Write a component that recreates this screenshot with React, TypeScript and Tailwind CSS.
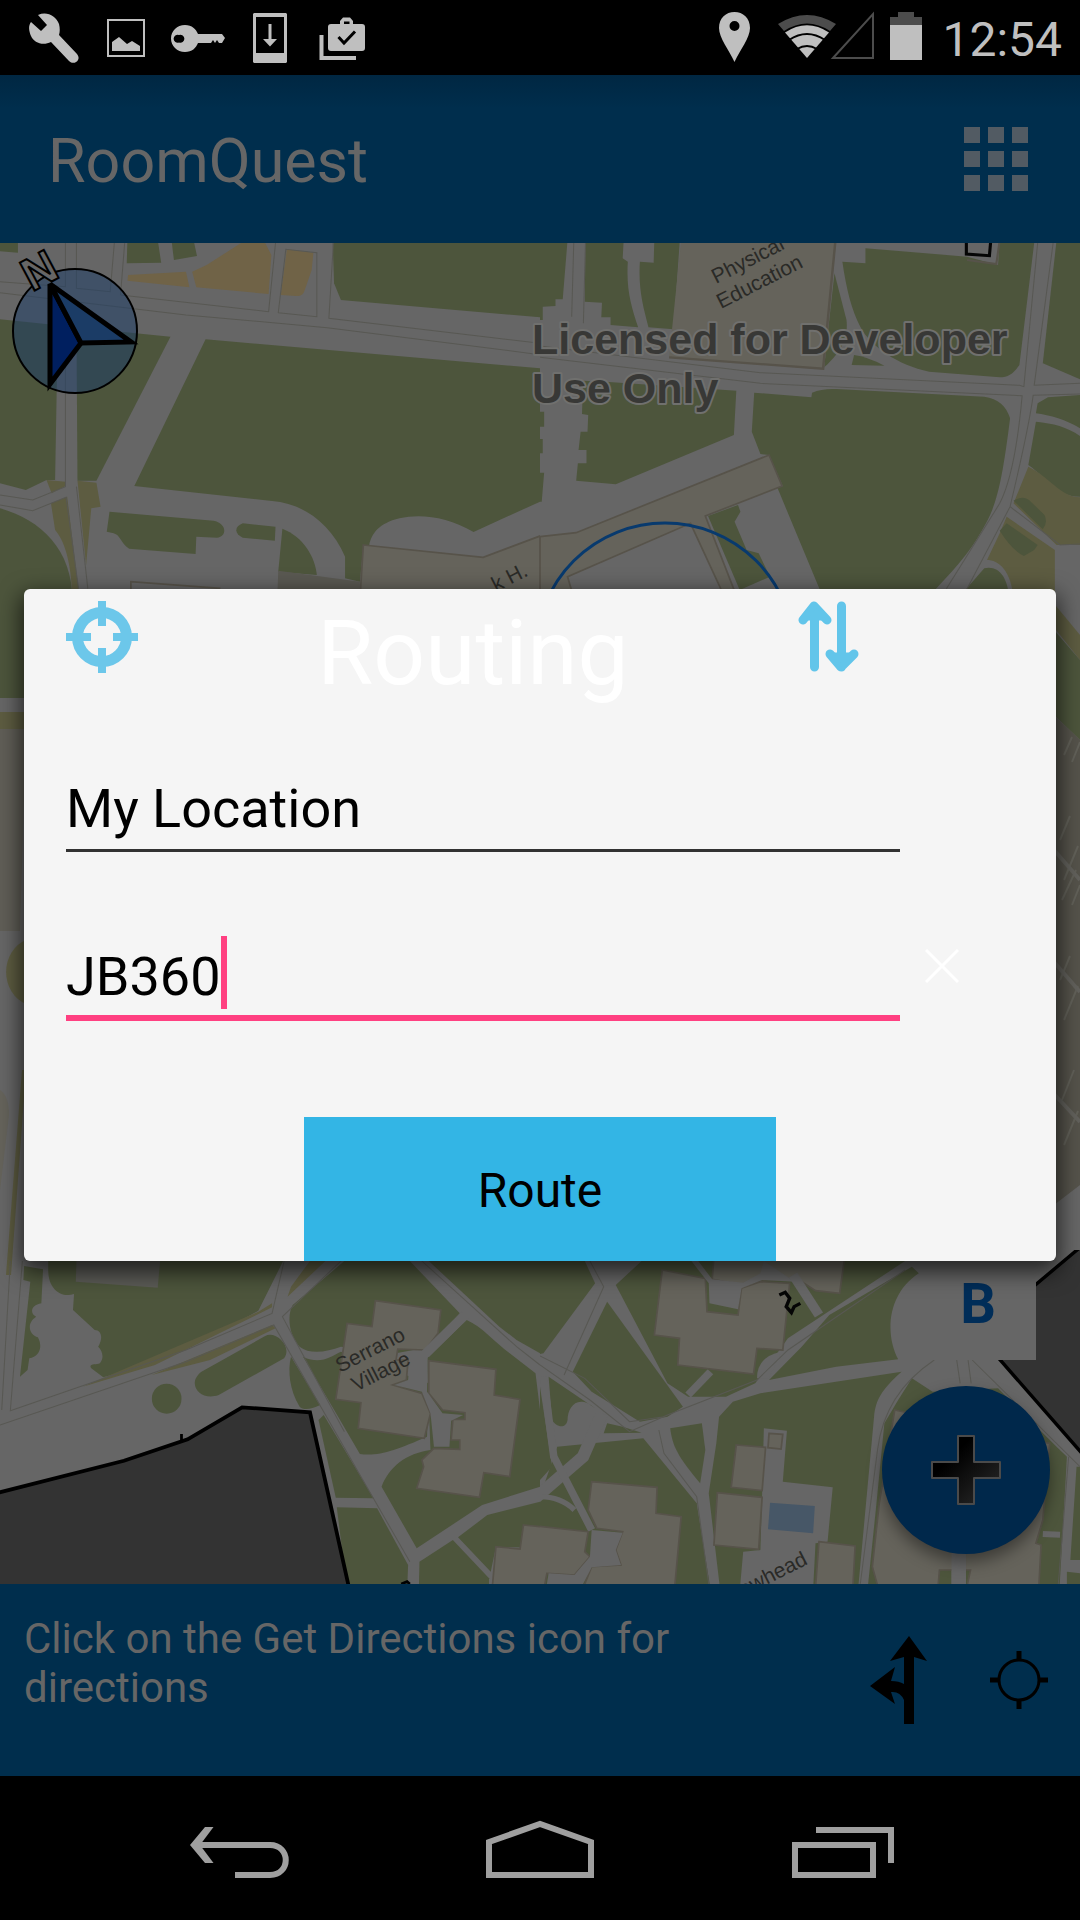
import { useState } from "react";

const GREEN = "#4d553c";
const ROAD = "#666666";
const BUILDING = "#65635b";
const EDGE = "#57534a";
const TAN = "#706347";
const OLIVE = "#5d5c41";
const LINE = "#585853";

function MapNorthWest() {
  return (
    <svg x="0" y="240" width="540" height="360" viewBox="0 0 1568 1080" preserveAspectRatio="none">
      <g fill={GREEN}>
        <path d="M0 0H52V38L0 34Z" />
        <path d="M370 0H458L468 68L368 70Z" />
        <path d="M498 0H562L572 48L505 60Z" />
        <path d="M966 0H1568V232L990 180L970 130Z" />
        <path d="M0 238L168 256L160 720H135L75 750L0 730Z" />
        <path d="M222 262L495 290L280 722L225 722Z" />
        <path d="M597 298L1568 385V785L1375 876C1300 830 1220 820 1160 835C1100 850 1080 880 1072 915L1055 915L1045 1025L1002 1015V950C960 850 880 790 790 783L390 738Z" />
        <path d="M318 815L620 842C660 850 660 890 630 893L570 890L568 942L375 926C350 910 350 885 330 880L310 875Z" />
        <path d="M705 850L800 860L798 902L705 893C680 880 680 860 705 850Z" />
        <path d="M820 866C880 890 915 950 920 1005L808 995Z" />
        <path d="M0 805C120 840 210 930 210 1080H0Z" />
      </g>
      <g fill={TAN}>
        <path d="M372 105L540 95L550 142L370 122Z" />
        <path d="M558 95L600 75L700 9H770L788 45L780 162L570 142Z" />
        <path d="M833 28L910 38L905 90L885 150Q880 170 860 168L815 165Z" />
      </g>
      <g fill={OLIVE}>
        <path d="M135 720L190 725V738L150 760Z" />
        <path d="M148 790L195 770L232 1080H210C208 960 185 900 160 870Z" />
        <path d="M225 722L280 728L292 800L265 805L250 975Z" />
      </g>
      <path d="M808 992L1045 1025V1080H805Z" fill="#5a5952" />
      <path d="M1055 915L1403 952L1568 888V1080H1045Z" fill={BUILDING} stroke={EDGE} strokeWidth="5" />
      <path d="M380 1080V1025L640 1045" fill="none" stroke={EDGE} strokeWidth="5" />
      <g fill="none" stroke={LINE} strokeWidth="3">
        <path d="M0 125L190 140V9M0 158L540 225L950 263L1568 344" />
        <path d="M222 9V145L320 155L332 9M350 165L780 215L800 9M350 165L362 9M808 218L920 230V38L830 28ZM968 9L955 235L1568 310" />
        <path d="M190 250V740L95 780L0 765M0 795L95 812L192 772L228 1046M222 740L255 1046" />
      </g>
    </svg>
  );
}

function MapNorthEast() {
  return (
    <svg x="540" y="240" width="540" height="360" viewBox="0 0 1568 1080" preserveAspectRatio="none">
      <g fill={GREEN}>
        <path d="M0 0H80L66 178H45V198L8 200V240H0Z" />
        <path d="M132 0H243L240 55L255 65C250 150 265 200 285 262L205 255V232H178L180 188L130 185Z" />
        <path d="M332 0H406L388 268L315 262C300 200 285 150 290 65L330 68Z" />
        <path d="M945 25L1240 50L1330 75L1335 0H1436L1392 375C1375 400 1360 412 1335 412L1130 395C1040 375 960 320 930 260C905 210 890 150 878 65L945 70Z" />
        <path d="M855 100L890 240C895 290 880 330 825 382Z" />
        <path d="M905 375L912 345Q950 350 1000 377Z" />
        <path d="M1500 0H1568V418L1460 370Z" />
        <path d="M125 422L190 425L570 452L563 585L220 733L105 722L110 670H135V630H112L118 575H138L140 525L122 522Z" />
        <path d="M0 515H12V560H0ZM0 597H8V640H0ZM0 698H12L5 785H0Z" />
        <path d="M790 458Q820 445 860 447L1290 470C1330 475 1355 500 1365 535C1345 700 1330 780 1300 840C1250 940 1200 990 1150 1046V1080H825L690 745L705 738L665 645L640 642L615 575L622 458L788 472Z" />
        <path d="M1475 472L1568 465V565C1530 540 1480 525 1440 520L1445 490Z" />
        <path d="M1440 545C1490 550 1530 560 1568 588V770C1500 770 1480 720 1418 675Z" />
      </g>
      <g fill={OLIVE}>
        <path d="M1418 680C1480 710 1510 770 1568 772V915H1500L1375 790Z" />
        <path d="M1335 880L1355 830L1495 930V1080H1375C1370 990 1330 960 1298 960Z" />
      </g>
      <g fill={GREEN}>
        <path d="M1375 782Q1400 765 1420 780L1465 825Q1475 850 1460 868Z" />
        <path d="M1335 872L1355 850L1445 915L1435 930L1405 948Q1370 930 1335 872Z" />
        <path d="M1290 985C1330 975 1360 1010 1362 1080H1210Z" />
      </g>
      <path d="M410 0H860L825 388L375 352Z" fill={BUILDING} />
      <path d="M858 0L822 386L375 352" fill="none" stroke={EDGE} strokeWidth="7" />
      <path d="M0 890L105 878L665 645L703 738L480 828L575 1080H540L437 850L80 1010L100 1080H0Z" fill={BUILDING} stroke={EDGE} strokeWidth="5" />
      <path d="M1240 60L1325 72L1335 0" fill="none" stroke={EDGE} strokeWidth="6" />
      <path d="M488 828L575 795L582 815L565 845L600 930L635 940L668 1010L580 1050Z" fill={GREEN} />
      <path d="M1238 0V42L1305 47L1309 0" fill="none" stroke="#050505" strokeWidth="9" />
      <g fill="none" stroke={LINE} strokeWidth="3">
        <path d="M0 318L640 398L1392 436L1405 440L1445 9M0 352L640 430L1400 467Q1380 700 1335 790L1180 1046" />
        <path d="M1490 9L1435 436L1568 430M1568 462L1432 466Q1420 560 1365 800L1240 1046M1365 800L1510 915L1568 912" />
        <path d="M98 9L92 230M132 9L126 250" />
      </g>
    </svg>
  );
}

function MapSides() {
  return (
    <g>
      <rect x="0" y="598" width="26" height="100" fill={GREEN} />
      <rect x="0" y="712" width="26" height="17" fill={OLIVE} />
      <path d="M0 729H26L20 931H0Z" fill="#605e57" />
      <path d="M26 940A30 34 0 0 0 26 1004Z" fill={OLIVE} />
      <path d="M0 1090Q9 1096 9 1115L0 1190Z" fill={BUILDING} />
      <path d="M26 1070L11 1275H6L22 1070Z" fill={OLIVE} />
      <path d="M1056 606L1080 635V660L1056 630Z" fill={OLIVE} />
      <path d="M1054 630L1080 660V740L1054 715Z" fill={GREEN} />
      <path d="M1054 715L1080 740V1185L1054 1205Z" fill="#55534b" />
      <path
        d="M1064 755l8 -18M1072 762l8 -20M1060 840l10 -24M1064 880l14 -34M1062 900l14 -30M1072 905l8 -20M1060 980l10 -24M1064 1020l14 -34M1062 1100l12 -30M1064 1145l14 -34"
        stroke="#626159"
        strokeWidth="2"
      />
      <path d="M1054 850L1080 880M1054 962L1080 992M1054 1094L1080 1122" stroke="#62615c" strokeWidth="4" />
    </g>
  );
}

function MapSouthWest() {
  return (
    <svg x="0" y="1250" width="540" height="360" viewBox="0 0 1568 1080" preserveAspectRatio="none">
      <g fill={GREEN}>
        <path d="M70 48L125 58L120 160C90 165 85 190 105 200C75 220 85 255 110 262C125 290 115 320 85 325L80 360L58 380L88 95L68 90Z" />
        <path d="M140 33H822L790 100L750 182C600 270 450 340 300 382L265 355C255 340 280 345 290 340C305 320 295 300 285 290C300 265 295 240 275 240L212 180L215 132C180 145 140 120 140 60Z" />
        <path d="M850 165L1000 33H1190L1335 190L1250 290L1150 310L990 290C950 305 900 315 870 290C835 250 835 190 850 165Z" />
        <path d="M1245 33H1568V310L1500 270L1450 230Z" />
        <path d="M1355 210C1400 230 1440 280 1480 310L1555 370L1568 480V710L1400 765L1210 895L1108 710C1130 650 1180 610 1250 600L1240 325Z" />
        <path d="M845 320L930 465C900 480 880 480 870 470C840 420 835 360 845 320Z" />
        <path d="M880 320C930 345 960 320 990 305L1245 400L1240 560C1150 600 1100 620 1045 612Z" />
        <path d="M940 495L925 510L975 743L1085 745Z" />
        <path d="M978 772L1095 775L1185 945L1180 1080H1015Z" />
        <path d="M1218 935L1315 870L1420 985V1080H1215Z" />
        <path d="M1330 862L1415 795L1568 755V895L1440 890L1425 965Z" />
        <path d="M585 365L770 258C800 240 850 290 825 325L635 435C580 455 540 400 585 365Z" />
        <ellipse cx="484" cy="446" rx="43" ry="45" />
      </g>
      <path d="M222 33H465L458 113L220 95Z" fill="#5b5b56" />
      <path d="M900 33L945 33L835 140L845 110ZM750 185L790 160V172L450 345L240 410ZM790 225L800 235L610 330L440 375Z" fill={OLIVE} />
      <g fill={BUILDING} stroke={EDGE} strokeWidth="5">
        <path d="M1090 152L1280 180L1272 250L1235 300L1155 297L1150 330L1185 330L1180 390L1140 405L1225 430L1250 490L1232 565L1040 535L1048 458L975 448L1008 220L1080 230Z" />
        <path d="M1245 332L1440 358L1435 435L1510 448L1480 680L1405 668L1392 742L1210 715L1230 650L1225 630L1260 595L1335 598V570L1310 570L1315 508L1350 508V488L1285 480L1245 430Z" />
        <path d="M1520 825L1600 833V1100H1422L1440 890L1510 897Z" />
      </g>
      <path d="M1190 315H1242L1240 425L1285 490L1345 495L1310 512L1305 590L1260 590L1250 490L1225 425L1145 405L1185 390Z" fill={ROAD} />
      <path d="M1235 312L1350 195" stroke={ROAD} strokeWidth="28" />
      <g fill="none" stroke={LINE} strokeWidth="3">
        <path d="M65 33L30 482L540 300L790 190L825 33M0 525L540 335L795 225L1190 935M30 33L5 480M990 33L820 200L1000 545M1225 33L1500 290L1568 345" />
      </g>
      <path d="M-20 732L360 632L545 568L703 472L900 487L1030 1090H-20Z" fill="#333333" stroke="#000000" strokeWidth="11" />
      <path d="M527 552V572M1165 1002L1182 995L1190 1002" stroke="#000000" strokeWidth="8" fill="none" />
    </svg>
  );
}

function MapSouthEast() {
  return (
    <svg x="540" y="1250" width="540" height="360" viewBox="0 0 1568 1080" preserveAspectRatio="none">
      <g fill={GREEN}>
        <path d="M0 33H130L160 100L10 310L0 312Z" />
        <path d="M220 105L295 33H1060L720 265L625 400L540 440H430L370 400Z" />
        <path d="M840 195L1080 50L1100 70C1010 130 1000 250 1040 328L860 350L665 390L760 290Z" />
        <path d="M520 500L560 455L640 430L1050 365C990 420 975 450 970 500L918 1080H530L490 730L512 580Z" />
        <path d="M195 155L415 470L370 500L290 515L150 425L95 365Z" />
        <path d="M25 380L160 475C110 430 80 470 80 510C75 540 45 530 35 510Z" />
        <path d="M50 590L300 565L455 760L505 1080H0V740Z" />
        <path d="M185 550L195 520L240 530L295 548Z" />
        <path d="M378 535L470 520L480 600L465 700C400 620 385 590 378 535Z" />
        <path d="M0 410L35 650L0 690Z" />
        <path d="M1080 385L1140 425L1330 415L1500 590L1530 620L1505 1080H945L975 780L1000 520L1040 450Z" />
        <path d="M1530 965L1568 970V1080H1530ZM1558 650H1568V930L1540 930Z" />
      </g>
      <g fill="none" stroke={ROAD}>
        <path d="M180 490L125 620L-20 750" strokeWidth="36" />
        <path d="M10 380L40 620L150 840" strokeWidth="22" />
        <path d="M0 740Q60 740 100 780" strokeWidth="16" />
        <path d="M430 435L495 365" strokeWidth="22" />
        <path d="M1215 900V1080" strokeWidth="40" />
        <path d="M1460 852L1510 854" strokeWidth="18" />
      </g>
      <path d="M650 535L717 542L705 695L850 712L835 875L800 880L790 1080H575L590 905L640 900L645 730Z" fill={ROAD} />
      <g fill={BUILDING} stroke={EDGE} strokeWidth="5">
        <path d="M505 20H885L870 130L800 122L745 85L640 90L590 105L500 88Z" />
        <path d="M355 60L480 85L485 185L575 195L585 115L640 95L725 100L705 300L630 295L620 372L400 345L405 265L332 255Z" />
        <path d="M150 695L340 712L337 790L410 800L385 1080H100L150 950L235 945L220 900L240 845L165 835L140 780Z" />
        <path d="M-10 828L140 845L130 905L145 920L100 975L20 970L0 1080H-10Z" />
        <path d="M570 585L655 592L645 722L555 712ZM515 728L645 742L635 898L505 885ZM665 550L705 553L700 597L662 593ZM810 875L915 888L905 1080H795Z" />
        <path d="M1030 480L1480 580L1460 810L1440 880L1455 885L1445 1080H1225L1250 960H1160L1150 1080H1000L965 950L985 760Z" />
      </g>
      <path d="M150 840L240 848L220 900L235 945L150 952L125 1002H20L25 970L100 975L145 920Z" fill={ROAD} />
      <path d="M1195 880H1237V1080H1195Z" fill={ROAD} />
      <path d="M430 20L490 100L492 160L575 178L585 115L645 90L740 95L650 33L640 70L590 98L500 88L450 20Z" fill={ROAD} />
      <path d="M735 75L810 195" stroke={ROAD} strokeWidth="28" />
      <path d="M630 385Q630 320 700 305L665 385Z" fill={ROAD} />
      <path d="M668 758L798 768L793 850L662 838Z" fill="#475767" />
      <g fill="none" stroke={LINE} strokeWidth="3">
        <path d="M1060 60L720 300L630 390L370 495L260 545L145 450L0 345M145 33L185 110L70 375M0 318L130 385L260 515L360 500M345 540L360 610L455 740L490 1002M1145 330Q1000 430 980 600L930 1002M1210 330L1220 400M1243 330L1252 400M1255 330L1568 650M1535 620L1505 1002" />
      </g>
      <path d="M1400 138L1580 -18H1620V665L1300 287Z" fill="#333333" stroke="#000000" strokeWidth="10" />
      <path d="M695 135L712 127L725 145L715 170L730 188L738 170L756 160" fill="none" stroke="#050505" strokeWidth="10" />
    </svg>
  );
}

function CampusMap() {
  return (
    <svg
      className="absolute inset-0 h-full w-full"
      viewBox="0 243 1080 1341"
      preserveAspectRatio="xMidYMid slice"
      role="img"
      aria-label="Campus map"
    >
      <rect x="0" y="243" width="1080" height="1341" fill={ROAD} />
      <MapNorthWest />
      <MapNorthEast />
      <MapSides />
      <MapSouthWest />
      <MapSouthEast />
      <circle cx="665" cy="652" r="129" fill="none" stroke="#083a6e" strokeWidth="3" />
      <g fill="#2a2a27" fontFamily="'Liberation Sans', sans-serif" fontSize="21">
        <text transform="translate(716 284) rotate(-27)">Physical</text>
        <text transform="translate(721 309) rotate(-27)">Education</text>
        <text transform="translate(340 1373) rotate(-27)">Serrano</text>
        <text transform="translate(356 1392) rotate(-27)">Village</text>
        <text transform="translate(743 1597) rotate(-27)">owhead</text>
        <text transform="translate(496 592) rotate(-27)">k H.</text>
      </g>
      <g
        fill="#383836"
        stroke="#70706e"
        strokeWidth="4"
        strokeLinejoin="round"
        paintOrder="stroke"
        fontFamily="'Liberation Sans', sans-serif"
        fontWeight="700"
        fontSize="43"
      >
        <text x="532" y="354">Licensed for Developer</text>
        <text x="532" y="403">Use Only</text>
      </g>
      <circle cx="75" cy="331" r="62" fill="#1a3b68" fillOpacity="0.5" stroke="#000000" strokeWidth="2" />
      <g stroke="#000000" strokeWidth="5" strokeLinejoin="miter">
        <path d="M50 284V384L81 343Z" fill="#001f5f" />
        <path d="M50 284L131 342L81 343Z" fill="#1b3c66" />
      </g>
      <text
        transform="translate(32 292) rotate(-28)"
        fill="#666666"
        stroke="#000000"
        strokeWidth="2"
        fontFamily="'Liberation Sans', sans-serif"
        fontWeight="700"
        fontSize="46"
      >
        N
      </text>
    </svg>
  );
}

function StatusBar() {
  return (
    <div className="flex h-[75px] shrink-0 items-center justify-between bg-black pl-[18px] pr-[18px] text-[#bfbfbf]">
      <div className="flex">
        <svg className="h-[75px] w-[72px]" viewBox="18 0 72 75" fill="currentColor" aria-hidden="true">
          <path d="M38 15C47 11 56 16 59 24C60 28 60 32 59 35L77 54C82 60 74 66 69 61L51 42C43 46 34 43 31 36C29 31 28 26 31 22L41 31L47 25Z" />
        </svg>
        <svg className="h-[75px] w-[72px]" viewBox="90 0 72 75" aria-hidden="true">
          <rect x="108" y="20" width="36" height="36" fill="none" stroke="currentColor" strokeWidth="2" />
          <path d="M112 51V42L119 37L127 44L132 41L140 46V51Z" fill="currentColor" />
        </svg>
        <svg className="h-[75px] w-[72px]" viewBox="162 0 72 75" fill="currentColor" aria-hidden="true">
          <path
            fillRule="evenodd"
            d="M185 25C192 25 196 29 198 34H222L225 38L222 43H219L217 40L215 43L213 40L211 43H198C196 48 192 52 185 52C177 52 171 46 171 38.500C171 31 177 25 185 25ZM179 35A4 4 0 1 0 179 42.500A4 4 0 1 0 179 35Z"
          />
        </svg>
        <svg className="h-[75px] w-[72px]" viewBox="234 0 72 75" fill="currentColor" aria-hidden="true">
          <path fillRule="evenodd" d="M254 13H286L287 14V62L286 63H254L253 62V14ZM256 17V53H284V17Z" />
          <path d="M268.500 24H271.500V39H277L270 46.500L263 39H268.500Z" />
        </svg>
        <svg className="h-[75px] w-[72px]" viewBox="306 0 72 75" fill="currentColor" aria-hidden="true">
          <path
            fillRule="evenodd"
            d="M331 24H340V21L343 17.500H350L353 21V24H362Q365 24 365 27V48Q365 51 362 51H331Q328 51 328 48V27Q328 24 331 24ZM344 24H349.500V21.500H344Z"
          />
          <path d="M338.500 37L344 43L355 31.500" fill="none" stroke="#000000" strokeWidth="3" />
          <path d="M321.500 35V58H356" fill="none" stroke="currentColor" strokeWidth="4" />
        </svg>
      </div>
      <div className="flex items-center">
        <svg className="h-[75px] w-8" viewBox="721 0 32 75" fill="currentColor" aria-hidden="true">
          <path
            fillRule="evenodd"
            d="M737.500 12C746 12 753 18 753 28C753 38 743 50 737.500 62C732 50 722 38 722 28C722 18 729 12 737.500 12ZM737.500 21A5 5 0 1 0 737.500 31A5 5 0 1 0 737.500 21Z"
          />
        </svg>
        <svg className="ml-7 h-[75px] w-24" viewBox="781 0 96 75" aria-hidden="true">
          <path d="M781 24Q810 6 839 24L833 31Q810 16 787 31Z" fill="#4c4c4c" />
          <path d="M788 32.500Q810 18 832 32.500L810 58Z" fill="currentColor" />
          <path d="M792 40Q810 28 828 40M800 49Q810 43 820 49" fill="none" stroke="#000000" strokeWidth="2" />
          <path d="M836 58L876 14V58Z" fill="none" stroke="#4c4c4c" strokeWidth="2" />
        </svg>
        <svg className="ml-4 h-[75px] w-8" viewBox="892 0 32 75" aria-hidden="true">
          <path d="M892 25V17H900V12H916V17H924V25Z" fill="#4c4c4c" />
          <path d="M892 25H924V60H892Z" fill="currentColor" />
        </svg>
        <time className="ml-5 pt-1 text-[48px] leading-[56px]">12:54</time>
      </div>
    </div>
  );
}

function AppBar() {
  return (
    <header className="flex h-[168px] shrink-0 items-center justify-between bg-linear-to-b from-[#002742] to-[#002e4d] to-20% pl-12 pr-[52px]">
      <h1 className="pt-1 text-[61px] leading-[72px] text-[#666666]">RoomQuest</h1>
      <button type="button" aria-label="Apps" className="grid grid-cols-3 gap-2">
        {Array.from({ length: 9 }, (_, i) => (
          <span key={i} className="size-4 bg-[#525b63]" />
        ))}
      </button>
    </header>
  );
}

function MapActions() {
  return (
    <div className="absolute right-[30px] bottom-[30px] flex flex-col items-end gap-[26px]">
      <button
        type="button"
        className="mr-[14px] flex h-28 w-[116px] items-center justify-center bg-[#666666] text-[56px] font-bold text-[#002d58]"
      >
        B
      </button>
      <button
        type="button"
        aria-label="Add"
        className="flex size-[168px] items-center justify-center rounded-full bg-[#00284b] shadow-[0_8px_16px_rgba(0,0,0,0.4)]"
      >
        <svg className="size-[72px]" viewBox="0 0 72 72" aria-hidden="true">
          <defs>
            <linearGradient id="plus" x1="0" y1="0" x2="1" y2="1">
              <stop offset="0.3" stopColor="#000000" />
              <stop offset="1" stopColor="#2c2c2c" />
            </linearGradient>
          </defs>
          <path
            d="M28 2H44V28H70V44H44V70H28V44H2V28H28Z"
            fill="url(#plus)"
            stroke="#4a4a4a"
            strokeWidth="2"
            strokeLinejoin="round"
          />
        </svg>
      </button>
    </div>
  );
}

function DirectionsBar() {
  return (
    <footer className="flex h-[192px] shrink-0 items-start justify-between bg-[#002e4d] pr-8 pl-6">
      <p className="max-w-[660px] pt-[30px] text-[42px] leading-[49px] text-[#666666]">
        Click on the Get Directions icon for directions
      </p>
      <div className="flex items-center gap-[62px] pt-[52px]">
        <button type="button" aria-label="Get directions">
          <svg className="h-[88px] w-[58px]" viewBox="871 1636 58 88" aria-hidden="true">
            <path d="M910 1636L928 1661L915 1657V1724H905V1700Q901 1691 892 1692L896 1704L871 1686L896 1667L892 1681Q900 1681 905 1684V1657L891 1661Z" />
          </svg>
        </button>
        <button type="button" aria-label="Locate me">
          <svg className="size-[58px]" viewBox="0 0 58 58" fill="none" stroke="#000000" aria-hidden="true">
            <circle cx="29" cy="29" r="20" strokeWidth="3" />
            <path d="M29 0V9M29 49V58M0 29H9M49 29H58" strokeWidth="5" />
          </svg>
        </button>
      </div>
    </footer>
  );
}

function RoutingDialog() {
  const [from, setFrom] = useState("My Location");
  const [to, setTo] = useState("JB360");
  const input = "h-16 bg-transparent p-0 text-[54px] leading-[64px] text-black outline-none";
  return (
    <div className="absolute inset-0 flex items-center px-6 pb-px">
      <form
        role="dialog"
        aria-label="Routing"
        onSubmit={(e) => e.preventDefault()}
        className="flex w-full flex-col rounded-md bg-[#f5f5f5] pt-3 shadow-[0_8px_22px_3px_rgba(0,0,0,0.65)]"
      >
        <div className="flex items-start justify-between pr-[192px] pl-[42px]">
          <button type="button" aria-label="Use my location">
            <svg className="size-[72px]" viewBox="0 0 72 72" fill="none" stroke="#6cc7ea" aria-hidden="true">
              <circle cx="36" cy="36" r="24.500" strokeWidth="11" />
              <path d="M36 0V25M36 47V72M0 36H25M47 36H72" strokeWidth="8" />
            </svg>
          </button>
          <h2 className="pl-4 text-[91px] leading-[105px] text-white">Routing</h2>
          <button type="button" aria-label="Swap start and destination">
            <svg
              className="size-[72px]"
              viewBox="792 601 72 72"
              fill="none"
              stroke="#62c5ea"
              strokeWidth="9"
              strokeLinecap="round"
              strokeLinejoin="round"
              aria-hidden="true"
            >
              <path d="M814.500 667V607M803 620L814 606L827 620M841.500 606V667M830 654L841 667L854 654" />
              <path d="M806 619L814 608L824 619ZM832 654L841 665L851 654Z" fill="#62c5ea" strokeWidth="3" />
            </svg>
          </button>
        </div>
        <div className="flex flex-col gap-[84px] pt-[63px] pr-[72px] pl-[42px]">
          <label className="mr-[84px] flex h-[83px] items-end border-b-[3px] border-[#323232] pb-2">
            <span className="sr-only">From</span>
            <input className={input} value={from} onChange={(e) => setFrom(e.target.value)} />
          </label>
          <div className="flex items-start">
            <label className="flex h-[85px] flex-1 items-end border-b-[6px] border-[#ff4081] pb-[6px]">
              <span className="sr-only">To</span>
              <input
                className={`${input} field-sizing-content caret-transparent`}
                value={to}
                onChange={(e) => setTo(e.target.value)}
              />
              <span className="h-[73px] w-[6px] bg-[#ff4081]" />
            </label>
            <button type="button" aria-label="Clear destination" className="flex h-15 w-[84px] items-center justify-center">
              <svg className="size-[34px]" viewBox="0 0 34 34" stroke="#ffffff" strokeWidth="3" aria-hidden="true">
                <path d="M1 1L33 33M33 1L1 33" />
              </svg>
            </button>
          </div>
        </div>
        <button
          type="submit"
          className="mt-24 h-36 w-[472px] self-center bg-[#33b5e5] pt-1 text-[48px] leading-[56px] text-black"
        >
          Route
        </button>
      </form>
    </div>
  );
}

function NavigationBar() {
  return (
    <nav className="grid h-36 shrink-0 grid-cols-3 bg-black px-[88px] text-[#9f9f9f]" aria-label="System">
      <button type="button" aria-label="Back" className="flex items-center justify-center">
        <svg className="h-15 w-[102px]" viewBox="188 1818 102 60" fill="none" stroke="currentColor" strokeWidth="6" aria-hidden="true">
          <path d="M197 1845H270C291 1845 291 1875 270 1875H235" />
          <path d="M205 1827H213.500L200 1845L213.500 1863H205L190 1845Z" fill="currentColor" stroke="none" />
        </svg>
      </button>
      <button type="button" aria-label="Home" className="flex items-center justify-center">
        <svg className="h-15 w-[108px]" viewBox="486 1818 108 60" fill="none" stroke="currentColor" strokeWidth="6" aria-hidden="true">
          <path d="M489 1842L540 1824L591 1842V1875H489Z" />
        </svg>
      </button>
      <button type="button" aria-label="Recent apps" className="flex items-center justify-center">
        <svg className="h-15 w-[106px]" viewBox="788 1818 106 60" fill="none" stroke="currentColor" strokeWidth="6" aria-hidden="true">
          <path d="M795 1845H873V1875H795ZM816 1830H891V1863" />
        </svg>
      </button>
    </nav>
  );
}

export default function App() {
  return (
    <div className="flex min-h-screen flex-col overflow-hidden bg-black font-[Roboto,'Noto_Sans',sans-serif]">
      <StatusBar />
      <main className="relative flex flex-1 flex-col">
        <AppBar />
        <section className="relative flex-1 overflow-hidden" aria-label="Map">
          <CampusMap />
          <MapActions />
        </section>
        <DirectionsBar />
        <RoutingDialog />
      </main>
      <NavigationBar />
    </div>
  );
}
